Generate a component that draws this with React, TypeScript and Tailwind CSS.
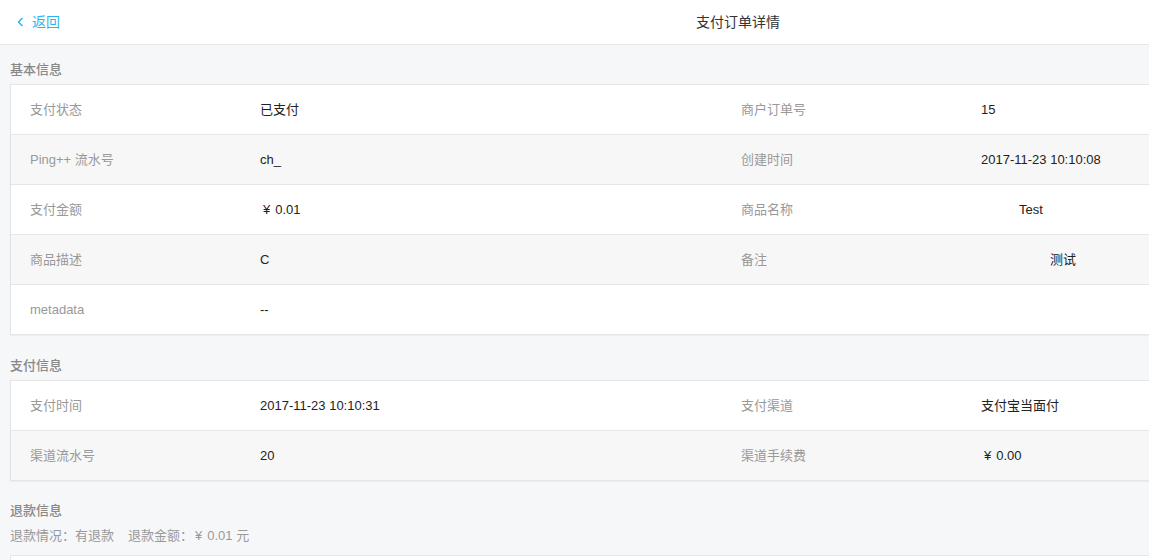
import React from 'react';

type Cell = { label: string; value?: React.ReactNode; valueClass?: string };

const font = { fontFamily: '"Liberation Sans", "Noto Sans CJK SC", sans-serif' };

function Yen({ amount }: { amount: string }) {
  return (
    <span>
      <span className="mr-[5px]" style={{ fontFamily: '"Liberation Sans", sans-serif' }}>¥</span>
      {amount}
    </span>
  );
}

const basicLeft: Cell[] = [
  { label: '支付状态', value: '已支付' },
  { label: 'Ping++ 流水号', value: 'ch_' },
  { label: '支付金额', value: <Yen amount="0.01" />, valueClass: 'pl-[3px]' },
  { label: '商品描述', value: 'C' },
  { label: 'metadata', value: '--' },
];

const basicRight: Cell[] = [
  { label: '商户订单号', value: '15' },
  { label: '创建时间', value: '2017-11-23 10:10:08' },
  { label: '商品名称', value: 'Test', valueClass: 'pl-[38px]' },
  { label: '备注', value: '测试', valueClass: 'pl-[69px]' },
  { label: '' },
];

const payLeft: Cell[] = [
  { label: '支付时间', value: '2017-11-23 10:10:31' },
  { label: '渠道流水号', value: '20' },
];

const payRight: Cell[] = [
  { label: '支付渠道', value: '支付宝当面付' },
  { label: '渠道手续费', value: <Yen amount="0.00" />, valueClass: 'pl-[3px]' },
];

function Column({ cells, side }: { cells: Cell[]; side: 'left' | 'right' }) {
  return (
    <div className={side === 'left' ? 'w-[721px] border-l border-[#e3e3e3]' : 'flex-1'}>
      {cells.map((c, i) => (
        <div
          key={i}
          className={`h-[50px] flex items-center border-b border-[#e6e6e6] ${i % 2 === 1 ? 'bg-[#f7f7f7]' : 'bg-white'}`}
        >
          <div className={`${side === 'left' ? 'w-[249px] pl-[19px]' : 'w-[250px] pl-[10px]'} text-[#999] shrink-0`}>
            {c.label}
          </div>
          <div className={`text-[#222] ${c.valueClass ?? ''}`}>{c.value}</div>
        </div>
      ))}
    </div>
  );
}

function Card({ left, right }: { left: Cell[]; right: Cell[] }) {
  return (
    <div className="flex border-t border-[#e6e6e6] shadow-[0_1px_1px_rgba(0,0,0,0.04)]">
      <Column cells={left} side="left" />
      <Column cells={right} side="right" />
    </div>
  );
}

function SectionTitle({ children }: { children: React.ReactNode }) {
  return <div className="leading-[17px] text-[#888] font-medium">{children}</div>;
}

export default function App() {
  return (
    <div className="w-full h-[560px] overflow-hidden bg-[#f6f7f9] text-[13px]" style={font}>
      <div className="w-[1476px]">
        <div className="h-[45px] bg-white border-b border-[#e6e6e6] relative flex items-center">
          <div className="flex items-center pl-[17px] text-[#2fb3f0] text-[14px]">
            <svg width="6" height="10" viewBox="0 0 6 10" fill="none">
              <path d="M5 1.5 L1.5 5 L5 8.5" stroke="#2fb3f0" strokeWidth="1.6" strokeLinecap="round" strokeLinejoin="round" />
            </svg>
            <span className="ml-[9px]">返回</span>
          </div>
          <div className="absolute left-0 right-0 text-center text-[14px] text-[#333] pointer-events-none">
            支付订单详情
          </div>
        </div>

        <div className="px-[10px]">
          <div className="pt-[16px] pb-[6px]">
            <SectionTitle>基本信息</SectionTitle>
          </div>
          <Card left={basicLeft} right={basicRight} />

          <div className="pt-[22px] pb-[6px]">
            <SectionTitle>支付信息</SectionTitle>
          </div>
          <Card left={payLeft} right={payRight} />

          <div className="pt-[21px]">
            <SectionTitle>退款信息</SectionTitle>
          </div>
          <div className="mt-[8px] leading-[17px] text-[#999] flex gap-[14px]">
            <span>退款情况：有退款</span>
            <span>
              退款金额：<span className="ml-[2px]"><Yen amount="0.01" /></span> 元
            </span>
          </div>
          <div className="mt-[11px] h-[60px] bg-white border-t border-l border-[#e6e6e6]" />
        </div>
      </div>
    </div>
  );
}
